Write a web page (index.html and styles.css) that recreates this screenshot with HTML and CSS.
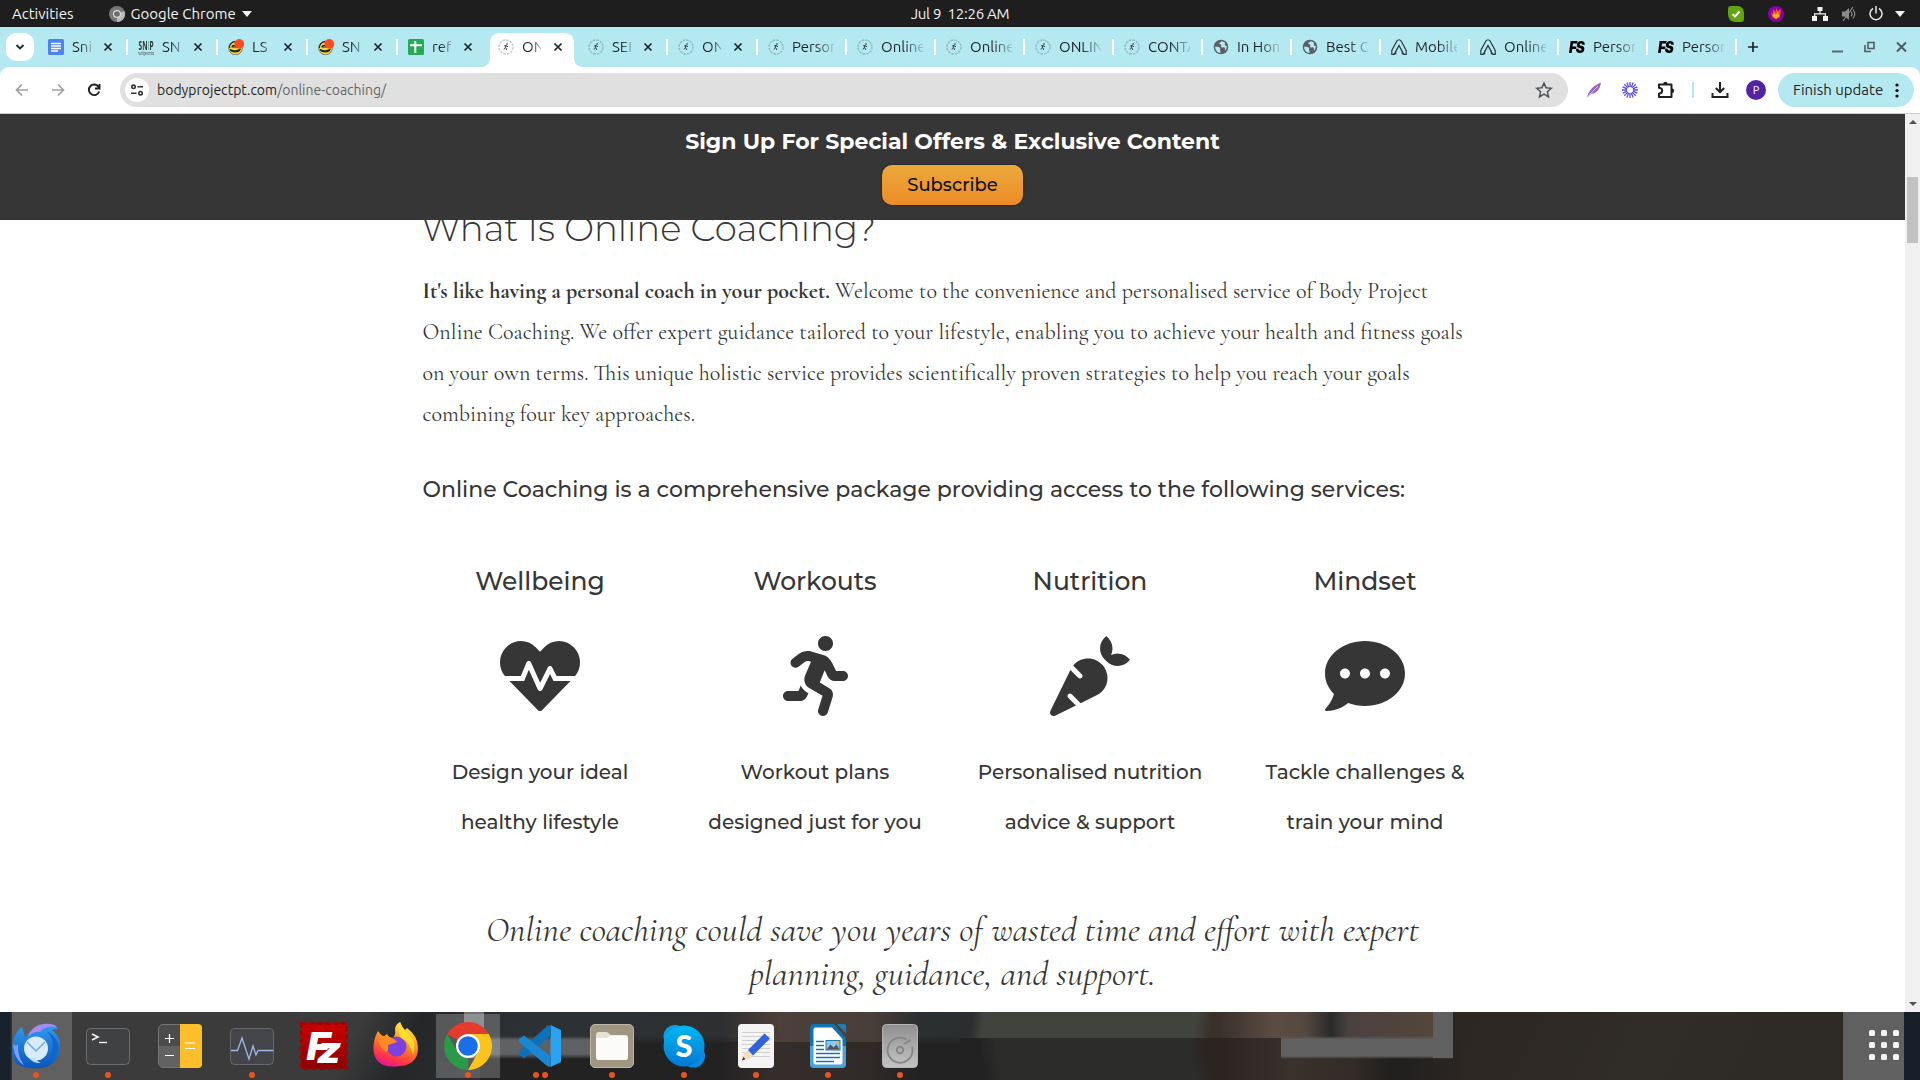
FILE: index.html
```html
<!DOCTYPE html>
<html lang="en">
<head>
<meta charset="utf-8">
<title>Online Coaching</title>
<link rel="stylesheet" href="styles.css">
</head>
<body>
<svg class="sprite" width="0" height="0" aria-hidden="true">
  <defs>
    <linearGradient id="gBird" x1="0" y1="0" x2="0" y2="1"><stop offset="0" stop-color="#2f9df5"/><stop offset="1" stop-color="#0b57b8"/></linearGradient>
    <linearGradient id="gFox" x1=".7" y1="0" x2=".3" y2="1"><stop offset="0" stop-color="#fff04a"/><stop offset=".45" stop-color="#ff8a1f"/><stop offset=".8" stop-color="#ff3647"/><stop offset="1" stop-color="#e5159a"/></linearGradient>
    <linearGradient id="gSkype" x1="0" y1="0" x2="0" y2="1"><stop offset="0" stop-color="#00b7f0"/><stop offset="1" stop-color="#0078d7"/></linearGradient>
    <linearGradient id="gDisk" x1="0" y1="0" x2="0" y2="1"><stop offset="0" stop-color="#8f8f8f"/><stop offset="1" stop-color="#c4c4c4"/></linearGradient>
    <linearGradient id="gRed" x1="0" y1="0" x2="0" y2="1"><stop offset="0" stop-color="#c90000"/><stop offset="1" stop-color="#8c0000"/></linearGradient>
  </defs>
  <symbol id="runner" viewBox="0 0 16 16"><circle cx="8" cy="8" r="7" fill="none" stroke="currentColor" stroke-opacity=".22" stroke-width="1.500" stroke-dasharray="2.700 .96"/><circle cx="9" cy="5" r=".8" fill="#222"/><path d="M6.200 6.800l1.800-.3.900.8 1.100.3M7.900 6.700L7.300 8.500l1.100 1 .2 1.400M7.300 8.600l-.6 1.200-1 .4" fill="none" stroke="#222" stroke-width=".9"/></symbol>
  <symbol id="globe" viewBox="0 0 16 16"><circle cx="8" cy="8" r="7.300" fill="#5b5f63"/><path d="M2.300 7.500c1.800.2 3.700.2 4.700 1.500.7 1-.5 1.700.2 2.500.5.700.2 2 0 2.400C4 13.500 1.800 10.500 2.300 7.500zM8.500 2.200c-.8 1.300-2.500 1-2.200 2.300.2.900 1.700.5 2 1.500.4 1.200-1 1.600.2 2.300 1.200.6 2-.6 3 .2 1 .7.300 2.200.3 3.200 1.500-1.200 2.300-3.200 1.900-5-1 .3-2.200-.4-1.800-1.500.2-.8.200-1.600-.6-2C10.500 2.600 9.500 2.200 8.500 2.200z" fill="#b5e9f1"/></symbol>
  <symbol id="arch" viewBox="0 0 16 16"><path d="M.8 15.300V11.500L5.700 2.200q2.300-3 4.600 0L15.200 11.500v3.800h-2.500L8 6.500 3.300 15.300zM4.700 15.300V12.300L8 6.500l3.300 5.800v3" fill="none" stroke="#27343a" stroke-width="1.150"/></symbol>
  <symbol id="badge" viewBox="0 0 16 16"><circle cx="7.500" cy="9" r="6.800" fill="#f5d83a" stroke="#222" stroke-width=".5"/><path d="M4 7.500c2-2 4-1 5 .5H4zM2 10.500c2 1.500 7 1.800 10 0-1 3-8 3.500-10 0zM1.300 9A6.300 6.300 0 0 1 7 2.600" fill="none" stroke="#222" stroke-width="1.100"/><circle cx="11.300" cy="4.900" r="4.800" fill="#ff4b1f"/></symbol>
  <symbol id="close" viewBox="0 0 10 10"><path d="M1.500 1.500l7 7M8.500 1.500l-7 7" stroke="#1f2427" stroke-width="1.700"/></symbol>
</svg>

<header class="topbar">
  <div class="left">
    <span>Activities</span>
    <div class="appmenu">
      <svg width="16" height="16" viewBox="0 0 16 16"><circle cx="8" cy="8" r="8" fill="#777"/><path d="M8 8L15.500 5A8 8 0 0 1 8 16z" fill="#bbb"/><circle cx="8" cy="8" r="4" fill="#ddd"/><circle cx="8" cy="8" r="2.800" fill="#6a6a6a"/></svg>
      <span>Google Chrome</span>
      <i class="caret"></i>
    </div>
  </div>
  <span class="clock">Jul 9&nbsp; 12:26 AM</span>
  <div class="tray">
    <svg width="16" height="16" viewBox="0 0 16 16"><path d="M3 0h7q6 1 6 7v6q0 3-3 3H7q-7-1-7-8V3q0-3 3-3z" fill="#62a512"/><path d="M4.500 8.200l2.500 2.300 4.500-5" fill="none" stroke="#fff" stroke-width="2"/></svg>
    <svg class="flame" width="16" height="16" viewBox="0 0 16 16"><circle cx="8" cy="8" r="8" fill="#8600ae"/><path d="M3 6l2 2V3l3 3V2l2 3 3-2-1 8q-4 4-8 0z" fill="#ff4a1c"/><path d="M5 10l1-3 2 2 2-4 1 5-3 3z" fill="#ffc321"/></svg>
    <svg class="net" width="16" height="14" viewBox="0 0 16 14"><path d="M5.500 0h5v4h-5zM0 9h5v5H0zM11 9h5v5h-5zM7.400 4h1.200v2.500H7.400zM2 6.200h12V9h-1.200V7.400H3.200V9H2z" fill="#f2f2f2"/></svg>
    <svg class="vol" width="16" height="16" viewBox="0 0 16 16"><path d="M1 5.500h3L8 2v12l-4-3.500H1z" fill="#8b8b8b"/><path d="M10 5.500q2 2.500 0 5M12 3.500q3.500 4.500 0 9M2 15L12 1" fill="none" stroke="#8b8b8b" stroke-width="1.200"/></svg>
    <svg class="pow" width="14" height="15" viewBox="0 0 14 15"><path d="M4 2.500A6 6 0 1 0 10 2.500M7 0v7.500" fill="none" stroke="#e8e8e8" stroke-width="1.500"/></svg>
    <i class="caret"></i>
  </div>
</header>

<div class="browser">
<nav class="tabstrip">
  <button class="tabsearch"><svg width="10" height="10" viewBox="0 0 10 10"><path d="M1.500 3L5 6.500 8.500 3" fill="none" stroke="#1f2427" stroke-width="1.800"/></svg></button>
  <div class="tab wide"><svg class="fav" viewBox="0 0 16 16"><rect width="16" height="16" rx="1.500" fill="#4c83ee"/><path d="M3 4.500h10M3 7h10M3 9.500h10M3 12h7" stroke="#fff" stroke-width="1.300"/></svg><span class="label">Snip</span><svg class="x"><use href="#close"/></svg></div>
  <div class="tab wide"><span class="fav snip"><b>SN<em>I</em>P</b><small>nutrigenomics</small></span><span class="label">SNI</span><svg class="x"><use href="#close"/></svg></div>
  <div class="tab wide"><svg class="fav"><use href="#badge"/></svg><span class="label">LS</span><svg class="x"><use href="#close"/></svg></div>
  <div class="tab wide"><svg class="fav"><use href="#badge"/></svg><span class="label">SNI</span><svg class="x"><use href="#close"/></svg></div>
  <div class="tab wide plain"><svg class="fav" viewBox="0 0 16 16"><rect width="16" height="16" rx="1.500" fill="#27a957"/><path d="M2 6.200h12M7.300 2v12" stroke="#fff" stroke-width="2"/></svg><span class="label">refe</span><svg class="x"><use href="#close"/></svg></div>
  <div class="tab wide active"><svg class="fav"><use href="#runner"/></svg><span class="label">ONL</span><svg class="x"><use href="#close"/></svg></div>
  <div class="tab wide"><svg class="fav"><use href="#runner"/></svg><span class="label">SER</span><svg class="x"><use href="#close"/></svg></div>
  <div class="tab wide"><svg class="fav"><use href="#runner"/></svg><span class="label">ONL</span><svg class="x"><use href="#close"/></svg></div>
  <div class="tab"><svg class="fav"><use href="#runner"/></svg><span class="label">Person</span></div>
  <div class="tab"><svg class="fav"><use href="#runner"/></svg><span class="label">Online</span></div>
  <div class="tab"><svg class="fav"><use href="#runner"/></svg><span class="label">Online</span></div>
  <div class="tab"><svg class="fav"><use href="#runner"/></svg><span class="label">ONLIN</span></div>
  <div class="tab"><svg class="fav"><use href="#runner"/></svg><span class="label">CONTA</span></div>
  <div class="tab"><svg class="fav"><use href="#globe"/></svg><span class="label">In Hom</span></div>
  <div class="tab"><svg class="fav"><use href="#globe"/></svg><span class="label">Best C</span></div>
  <div class="tab"><svg class="fav"><use href="#arch"/></svg><span class="label">Mobile</span></div>
  <div class="tab"><svg class="fav"><use href="#arch"/></svg><span class="label">Online</span></div>
  <div class="tab"><span class="fav fs">FS</span><span class="label">Person</span></div>
  <div class="tab"><span class="fav fs">FS</span><span class="label">Person</span></div>
  <svg class="newtab" width="12" height="12" viewBox="0 0 12 12"><path d="M6 1v10M1 6h10" stroke="#1f2427" stroke-width="1.700"/></svg>
  <div class="winctl">
    <svg width="11" height="12" viewBox="0 0 11 12"><path d="M0 10.500h11" stroke="#5a6a70" stroke-width="2"/></svg>
    <svg width="11" height="12" viewBox="0 0 11 12"><path d="M4 1.500h6v6H4zM1 4v6.500h6" fill="none" stroke="#4f5c61" stroke-width="1.600"/></svg>
    <svg width="11" height="12" viewBox="0 0 11 12"><path d="M1 1.500l9 9M10 1.500l-9 9" stroke="#4f5c61" stroke-width="2"/></svg>
  </div>
</nav>

<div class="toolbar">
  <div class="navbtns">
    <svg class="ico" viewBox="0 0 16 16"><path d="M14 8H3M8 2.500L2.500 8 8 13.500" fill="none" stroke="#a0a0a0" stroke-width="1.700"/></svg>
    <svg class="ico" viewBox="0 0 16 16"><path d="M2 8h11M8 2.500L13.500 8 8 13.500" fill="none" stroke="#a0a0a0" stroke-width="1.700"/></svg>
    <svg class="ico" viewBox="0 0 16 16"><path d="M12.700 5A5.300 5.300 0 1 0 13.200 9.500M13.500 2v4.500H9" fill="none" stroke="#1f1f1f" stroke-width="1.900"/></svg>
  </div>
  <div class="omnibox">
    <span class="siteinfo"><svg width="14" height="14" viewBox="0 0 14 14" fill="none" stroke="#333" stroke-width="1.600"><circle cx="3.500" cy="3.800" r="1.700"/><path d="M7.500 3.800H13M1 10.200h5.500"/><circle cx="10.500" cy="10.200" r="1.700"/></svg></span>
    <span class="url">bodyprojectpt.com<span class="path">/online-coaching/</span></span>
    <svg class="star" width="18" height="18" viewBox="0 0 24 24"><path d="M12 2.800l2.800 6.300 6.900.7-5.200 4.600 1.500 6.800-6-3.600-6 3.600 1.500-6.800-5.200-4.600 6.900-.7z" fill="none" stroke="#505356" stroke-width="2"/></svg>
  </div>
  <div class="exts">
    <svg class="ico" viewBox="0 0 16 16"><path d="M1 15.500C3 8 7 4 15 .5 14 7 11 11 5 12z" fill="#9a5fc0"/><path d="M1 15.500L12 4" stroke="#e3c9f2" stroke-width="1"/></svg>
    <svg class="ico sun" viewBox="0 0 16 16"><path d="M8 0v5M8 11v5M0 8h5M11 8h5M2.300 2.300l3.600 3.600M10.100 10.100l3.600 3.600M2.300 13.700l3.600-3.600M10.100 5.900l3.600-3.600M4.900.6l1.900 4.600M9.200 10.800l1.900 4.600M.6 11.100l4.600-1.900M10.800 6.800l4.600-1.900M.6 4.900l4.600 1.900M10.800 9.200l4.600 1.900M4.900 15.400l1.900-4.600M9.200 5.200l1.900-4.600" stroke="#5a4af0" stroke-width="1.300"/></svg>
    <svg class="puzzle" width="18" height="18" viewBox="0 0 18 18"><path d="M2 3.500h12.500V16H2V12.700q3.200-.5 3.200-3T2 6.800z" fill="none" stroke="#1f1f1f" stroke-width="2" stroke-linejoin="round"/><path d="M6.200 3a2.200 2.200 0 0 1 4.400 0zM15 7.500a2.200 2.200 0 0 1 0 4.400z" fill="#1f1f1f"/></svg>
    <i class="divider"></i>
    <svg class="dl" width="18" height="18" viewBox="0 0 18 18"><path d="M9 1v9.500M4.800 7L9 11.200 13.200 7M1.500 12v4h15v-4" fill="none" stroke="#1f1f1f" stroke-width="2"/></svg>
    <span class="avatar">P</span>
    <button class="update"><span>Finish update</span><svg width="4" height="15" viewBox="0 0 4 15"><circle cx="2" cy="2" r="1.600"/><circle cx="2" cy="7.500" r="1.600"/><circle cx="2" cy="13" r="1.600"/></svg></button>
  </div>
</div>
</div>

<main class="viewport">
  <div class="page">
    <section class="banner">
      <h2>Sign Up For Special Offers &amp; Exclusive Content</h2>
      <button class="subscribe">Subscribe</button>
    </section>
    <article class="content">
      <h1>What Is Online Coaching<span class="mark">?</span></h1>
      <p class="intro"><strong>It's like having a personal coach in your pocket.</strong> Welcome to the convenience and personalised service of Body Project Online Coaching. We offer expert guidance tailored to your lifestyle, enabling you to achieve your health and fitness goals on your own terms. This unique holistic service provides scientifically proven strategies to help you reach your goals combining four key approaches.</p>
      <h3>Online Coaching is a comprehensive package providing access to the following services:</h3>
      <div class="services">
        <div class="service">
          <h4>Wellbeing</h4>
          <svg viewBox="0 0 512 512"><path d="M320.200 243.800l-49.700 99.400c-6 12.100-23.400 11.700-28.900-.6l-56.900-126.300-30 71.700H60.600l182.500 186.500c7.100 7.300 18.600 7.300 25.700 0L451.400 288H342.300l-22.100-44.200zM473.700 73.900l-2.400-2.500c-51.500-52.600-135.800-52.600-187.400 0L256 100l-27.900-28.500c-51.500-52.700-135.900-52.700-187.400 0l-2.400 2.400C-10.400 123.700-12.500 203 31 256h102.400l35.900-86.200c5.400-12.900 23.600-13.100 29.300-.4l58.200 129.300 49-97.900c5.900-11.800 22.700-11.800 28.600 0l27.600 55.200H481c43.500-53 41.400-132.300-7.300-182.100z"/></svg>
          <p>Design your ideal<br>healthy lifestyle</p>
        </div>
        <div class="service">
          <h4>Workouts</h4>
          <svg viewBox="0 0 416 512"><path d="M272 96c26.510 0 48-21.490 48-48S298.510 0 272 0s-48 21.490-48 48 21.490 48 48 48zM113.690 317.470l-14.800 34.520H32c-17.670 0-32 14.330-32 32s14.330 32 32 32h77.450c19.250 0 36.580-11.440 44.110-29.090l8.790-20.520-10.670-6.300c-17.320-10.230-30.060-25.370-37.990-42.610zM384 223.990h-44.030l-26.060-53.250c-12.500-25.550-35.450-44.230-61.780-50.940l-71.080-21.140c-28.300-6.800-57.770-.55-80.840 17.140l-39.670 30.410c-14.030 10.750-16.690 30.830-5.940 44.860s30.840 16.660 44.860 5.910l39.690-30.410c7.670-5.890 17.440-8 25.270-6.140l14.700 4.370-37.460 87.390c-12.620 29.480-1.310 64.010 26.300 80.310l84.980 50.170-27.470 87.730c-5.280 16.860 4.110 34.820 20.970 40.090 3.190 1 6.410 1.480 9.580 1.480 13.610 0 26.230-8.770 30.520-22.450l31.640-101.060c5.910-20.770-2.890-43.080-21.640-54.390l-61.240-36.140 31.310-78.280 20.270 41.430c8 16.340 24.920 26.890 43.110 26.890H384c17.670 0 32-14.330 32-32s-14.330-31.990-32-31.990z"/></svg>
          <p>Workout plans<br>designed just for you</p>
        </div>
        <div class="service">
          <h4>Nutrition</h4>
          <svg viewBox="0 0 512 512"><path d="M298.200 156.600c-52.700-25.700-114.500-10.500-150.200 32.800l55.200 55.200c6.300 6.300 6.300 16.400 0 22.600-3.100 3.100-7.200 4.700-11.300 4.700s-8.200-1.600-11.300-4.700L130.400 217 2.300 479.700c-2.900 6-3.100 13.300 0 19.700 5.400 11.100 18.900 15.700 30 10.300l133.600-65.200-49.200-49.200c-6.300-6.200-6.300-16.400 0-22.600 6.300-6.200 16.400-6.200 22.600 0l57 57 102-49.800c24-11.700 44.500-31.300 57.100-57.100 30.100-61.700 4.500-136.100-57.200-166.200zm92.100-34.900C409.800 81 399.700 32.900 360 0c-50.300 41.700-52.500 107.500-7.900 151.900l8 8c44.400 44.600 110.300 42.400 151.900-7.900-32.900-39.700-81-49.800-121.700-30.300z"/></svg>
          <p>Personalised nutrition<br>advice &amp; support</p>
        </div>
        <div class="service">
          <h4>Mindset</h4>
          <svg viewBox="0 0 512 512"><path d="M256 32C114.600 32 0 125.100 0 240c0 49.600 21.400 95 57 130.700C44.500 421.100 2.700 466 2.200 466.500c-2.200 2.300-2.800 5.700-1.500 8.700S4.800 480 8 480c66.300 0 116-31.800 140.600-51.400 32.700 12.300 69 19.400 107.400 19.400 141.400 0 256-93.100 256-208S397.400 32 256 32zM128 272c-17.700 0-32-14.300-32-32s14.300-32 32-32 32 14.300 32 32-14.300 32-32 32zm128 0c-17.700 0-32-14.300-32-32s14.300-32 32-32 32 14.300 32 32-14.300 32-32 32zm128 0c-17.700 0-32-14.300-32-32s14.300-32 32-32 32 14.300 32 32-14.300 32-32 32z"/></svg>
          <p>Tackle challenges &amp;<br>train your mind</p>
        </div>
      </div>
      <blockquote>Online coaching could save you years of wasted time and effort with expert<br>planning, guidance, and support.</blockquote>
    </article>
  </div>
  <div class="scrollbar"><i class="up"></i><i class="thumb"></i><i class="down"></i></div>
</main>

<footer class="dock">
  <div class="app lit"><svg viewBox="0 0 48 48"><path d="M1 36C-2 24 3 9 10 5q2 5 3 11Q20 3 34 2q9-.5 12 5-4-.5-6 1c7 6 9 12 8 18C47 39 38 46.500 24 46.500 12 46.500 3 43 1 36z" fill="url(#gBird)"/><path d="M16 15C19 6 27 .5 38 2q5 .5 7 3-5-1-9 0-5 1-8 5-6-1-12 5z" fill="#a78bf0"/><path d="M1 22q2 17 11 21Q5 34 6 22q-2 3-5 0z" fill="#7f9cf5"/><path d="M35 9q8 9 5 20 0 6-8 11 12-2 15-14-1-10-12-17z" fill="#1265cc"/><circle cx="24" cy="26.500" r="12" fill="#d9ecfc"/><path d="M15 20L24 29 33 20" fill="none" stroke="#6fa9e0" stroke-width="1.500"/><path d="M17 36q4 5.500 12 5-5-2-5-5z" fill="#bfe0fb"/></svg><span class="dots"><i></i></span></div>
  <div class="app"><svg viewBox="0 0 48 48"><rect x="2.500" y="6.500" width="43" height="36" rx="4" fill="#3f4143" stroke="#6b6d6e"/><path d="M8 12l6 3-6 3" fill="none" stroke="#f3f3f3" stroke-width="1.600"/><path d="M15 20.500h8" stroke="#f3f3f3" stroke-width="1.400"/></svg><span class="dots"><i></i></span></div>
  <div class="app"><svg viewBox="0 0 48 48"><rect x="2.500" y="2.500" width="43" height="43" rx="4.500" fill="#4c4c4c" stroke="#757575"/><path d="M3 24h21v21H7q-4 0-4-4z" fill="#626262"/><path d="M24 2h18q4 0 4 4v36q0 4-4 4H24z" fill="#fdbe2b"/><path d="M9 16.500h9M13.500 12v9M9 33.500h9M29 21h10M29 26.500h10" stroke="#fff" stroke-width="1.200"/></svg></div>
  <div class="app"><svg viewBox="0 0 48 48"><rect x="2.500" y="6.500" width="43" height="36" rx="4" fill="#434549" stroke="#66686b"/><path d="M3 28.500h6.500L14 16l7 21 4-13 3 9 2-4.500h15.500" fill="none" stroke="#9fb8ea" stroke-width="1.300"/></svg><span class="dots"><i></i></span></div>
  <div class="app"><svg viewBox="0 0 48 48"><rect x="1.500" y="1.500" width="45" height="45" fill="url(#gRed)" stroke="#a50000" stroke-width="3" stroke-dasharray="5 3"/><text x="6" y="38" font-family="Montserrat" font-style="italic" font-weight="800" font-size="40" fill="#fff" textLength="24" lengthAdjust="spacingAndGlyphs">F</text><text x="18" y="41" font-family="Montserrat" font-style="italic" font-weight="800" font-size="36" fill="#fff" textLength="22" lengthAdjust="spacingAndGlyphs">z</text></svg></div>
  <div class="app"><svg viewBox="0 0 48 48"><path d="M6 9l5 6 4-3q2 4 6 4 3-3 2-9 0-4 5-7 2 6 5 8l2-2q11 8 11 20 0 18-22 18.500Q3 46 1.500 28 1 17 6 9z" fill="url(#gFox)"/><circle cx="24.500" cy="24.500" r="10" fill="#7b42e0"/><path d="M5 12l10 3q6 0 10 5l-9 3q1 5-2 7-8-5-9-18z" fill="#ff8b22"/><path d="M28 0q4 9 10 13 7 9 3 20-3-13-12-17-5-7-1-16z" fill="#ffe02f" opacity=".85"/></svg></div>
  <div class="app current"><svg viewBox="0 0 48 48"><path d="M24 24L3.220 12A24 24 0 0 1 44.780 12L24 12z" fill="#e33b2e"/><path d="M24 24L24 48A24 24 0 0 1 3.220 12L13.600 30z" fill="#2a9a48"/><path d="M24 12H44.780A24 24 0 0 1 24 48L34.400 30z" fill="#fcc31a"/><circle cx="24" cy="24" r="12" fill="#fff"/><circle cx="24" cy="24" r="9.800" fill="#1a6fe8"/></svg><span class="dots"><i></i></span></div>
  <div class="app"><svg viewBox="0 0 48 48"><path d="M34.500 3L45 8v32l-10.500 5z" fill="#2aa3f2"/><path d="M34.500 3v11L8 36.500 3 32.500v-3L31 4z" fill="#0e70b8"/><path d="M34.500 45V34L8 13.500 3 17v3l28 24z" fill="#1b86d2"/></svg><span class="dots"><i></i><i></i></span></div>
  <div class="app"><svg viewBox="0 0 48 48"><rect x="2.500" y="2.500" width="43" height="43" rx="4.500" fill="#9e9682" stroke="#bdb7a6"/><path d="M8 13q0-3 3-3h7q2 0 3 1.500l1.500 1.500H37q3 0 3 3v19q0 3-3 3H11q-3 0-3-3z" fill="#e6e2d8"/><path d="M8 16h11l3-2.500h15q3 0 3 3V35q0 3-3 3H11q-3 0-3-3z" fill="#fbfbfa"/></svg><span class="dots"><i></i></span></div>
  <div class="app"><svg viewBox="0 0 48 48"><circle cx="15" cy="14.500" r="11.500" fill="#0aa0e6"/><circle cx="33.500" cy="34" r="11.500" fill="#0b8be0"/><circle cx="24" cy="24" r="20.500" fill="url(#gSkype)"/><text x="24" y="35" text-anchor="middle" font-family="Lato" font-weight="900" font-size="31" fill="#fff">S</text></svg><span class="dots"><i></i></span></div>
  <div class="app"><svg viewBox="0 0 48 48"><rect x="6" y="2" width="36" height="44" rx="4" fill="#f4f4f4"/><path d="M10 10.500h28M10 14.500h28M10 18.500h28M10 22.500h28M10 26.500h28M10 30.500h28M10 34.500h28" stroke="#cfcfcf"/><path d="M10 38l2.500-7.500L16 28l5 5-3.500 3.500z" fill="#fbdcb4"/><path d="M10 38.500l1.200-3.500 2.300 2.200z" fill="#333"/><path d="M16 28L32.500 11.500l5.500 5L21 33.500z" fill="#2f62dd"/></svg><span class="dots"><i></i></span></div>
  <div class="app"><svg viewBox="0 0 48 48"><path d="M6 6q0-4 4-4h20l12 14v26q0 4-4 4H10q-4 0-4-4z" fill="#1173ae"/><path d="M6 24h36v18q0 4-4 4H10q-4 0-4-4z" fill="#49a3d8"/><path d="M9.500 7.500q0-2 2-2H28L38.500 17v23.500q0 2-2 2h-25q-2 0-2-2z" fill="#fff"/><path d="M33 2h7q2 0 2 2v7.500z" fill="#1d7fba"/><path d="M12 19.500h8M12 23.500h8M12 27.500h8M12 31.500h24M12 35.500h24M12 39.500h18" stroke="#1b76ae" stroke-width="1.600"/><rect x="22" y="18.500" width="14" height="9.500" fill="#8cc8ee" stroke="#1b76ae"/><path d="M22.500 27.500l4-5 3 3 3-3 3 5z" fill="#555"/><circle cx="33.500" cy="20.800" r="1.500" fill="#f5b51b"/></svg><span class="dots"><i></i></span></div>
  <div class="app"><svg viewBox="0 0 48 48"><rect x="6.500" y="2.500" width="35" height="43" rx="4" fill="url(#gDisk)" stroke="#b5b5b5"/><path d="M36 24.500A12.500 12.500 0 1 1 30.500 17.500M28.500 22l6-4M28.500 22l-.5-1" fill="none" stroke="#868686" stroke-width="1.900"/><circle cx="24" cy="28" r="3.200" fill="none" stroke="#868686" stroke-width="1.900"/></svg><span class="dots"><i></i></span></div>
  <div class="appgrid"><i></i><i></i><i></i><i></i><i></i><i></i><i></i><i></i><i></i></div>
</footer>
</body>
</html>
```
FILE: styles.css
```css
* { box-sizing: border-box; }
body { margin: 0; width: 1920px; height: 1080px; overflow: hidden; display: flex; flex-direction: column; background: #fff; font-family: Ubuntu, "Noto Sans", sans-serif; font-size: 15px; color: #1f2427; }
.sprite { position: absolute; }
button { border: 0; padding: 0; font: inherit; color: inherit; }
svg { flex: none; display: block; }

/* Desktop top bar */
.topbar { height: 27px; flex: none; background: #1e1e1e; color: #f2f2f2; display: grid; grid-template-columns: 1fr auto 1fr; align-items: center; }
.left { display: flex; align-items: center; gap: 35px; padding-left: 12px; }
.appmenu { display: flex; align-items: center; gap: 6px; }
.caret { border: 5px solid transparent; border-top: 6px solid #f2f2f2; border-bottom: 0; }
.clock { letter-spacing: -.25px; margin-top: -1px; }
.tray { display: flex; align-items: center; justify-content: flex-end; padding-right: 15px; }
.flame { margin: 0 28px 0 24px; }
.vol { margin: 0 12px 0 13px; }
.pow { margin-right: 12px; }

/* Browser window */
.browser { flex: none; background: #b5e9f1; }
.tabstrip { height: 40px; display: flex; align-items: center; }
.tabsearch { flex: none; width: 28px; height: 28px; margin: 0 3px 0 6px; border-radius: 10px; background: #fff; display: grid; place-items: center; }
.tab { position: relative; flex: none; width: 89px; height: 34px; display: flex; align-items: center; padding-left: 11px; }
.tab.wide { width: 90px; }
.tab::after { content: ""; position: absolute; right: -1px; top: 9px; width: 2px; height: 16px; background: #fff; }
.tab.plain::after { display: none; }
.fav { flex: none; width: 16px; height: 16px; margin-right: 8px; }
.label { width: 42px; margin-top: -1px; overflow: hidden; white-space: nowrap; -webkit-mask-image: linear-gradient(90deg, #000 55%, rgba(0,0,0,.15)); mask-image: linear-gradient(90deg, #000 55%, rgba(0,0,0,.15)); }
.wide .label { width: 19px; -webkit-mask-image: linear-gradient(90deg, #000 45%, rgba(0,0,0,.3)); mask-image: linear-gradient(90deg, #000 45%, rgba(0,0,0,.3)); }
.x { width: 10px; height: 10px; margin-left: 12px; }
.snip { display: flex; flex-direction: column; align-items: center; line-height: 1; color: #333; white-space: nowrap; }
.snip b { font: 700 13px/12px "Open Sans", sans-serif; transform: scaleX(.5); }
.snip em { font-style: normal; color: #55c2a8; }
.snip small { font-size: 5px; line-height: 4px; transform: scaleX(.5); }
.fs { font: italic 900 16px/16px Inter, sans-serif; letter-spacing: -1.500px; color: #000; transform: scaleX(.85); transform-origin: left; }
.active { align-self: flex-start; margin-top: 6px; padding-bottom: 6px; }
.active > * { position: relative; z-index: 2; }
.tab.active::before { content: ""; position: absolute; left: -5px; bottom: 0; width: 100px; height: 8px; background:
  radial-gradient(circle at 0 0, transparent 7.500px, #fff 8px) 0 0 / 8px 8px no-repeat,
  radial-gradient(circle at 100% 0, transparent 7.500px, #fff 8px) 100% 0 / 8px 8px no-repeat; }
.tab.active::after { z-index: 1; left: 3px; right: auto; top: 0; width: 84px; height: 35px; background: #fff; border-radius: 9px 9px 0 0; }
.newtab { margin-left: 11px; }
.winctl { margin-left: auto; display: flex; gap: 21px; padding-right: 13px; }

.toolbar { height: 47px; display: flex; align-items: center; position: relative; z-index: 1; background: #fff; border-bottom: 1px solid #ccc; border-radius: 9px 9px 0 0; padding: 0 6px 0 14px; }
.ico { width: 16px; height: 16px; }
.navbtns { display: flex; gap: 20px; margin-right: 18px; }
.omnibox { width: 1448px; height: 34px; border-radius: 17px; background: #e0e0e0; display: flex; align-items: center; padding: 0 15px 0 5px; }
.siteinfo { width: 24px; height: 24px; border-radius: 50%; background: #fff; display: grid; place-items: center; }
.url { margin-left: 8px; font-size: 14px; color: #1f1f1f; }
.path { color: #63666a; }
.star { margin-left: auto; }
.exts { display: flex; align-items: center; margin-left: 18px; }
.sun { margin: 0 19px 0 20px; }
.divider { width: 2px; height: 16px; background: #b5e9f1; margin: 0 17px; }
.avatar { width: 20px; height: 20px; border-radius: 50%; background: #5323a4; color: #fff; font-size: 11px; display: grid; place-items: center; margin: 0 12px 0 17px; }
.update { width: 136px; height: 34px; border-radius: 17px; background: #b5e9f1; display: flex; align-items: center; justify-content: space-between; padding: 0 15px; }
.update span { margin-top: -1px; }

/* Web page */
.viewport { height: 898px; flex: none; display: flex; overflow: hidden; }
.page { width: 1905px; overflow: hidden; color: #363636; font-family: Montserrat, Inter, sans-serif; }
.banner { height: 106px; background: #363636; position: relative; z-index: 1; display: flex; flex-direction: column; align-items: center; color: #fff; padding-top: 13px; }
.banner h2 { margin: 0 0 8px; font-size: 22px; line-height: 30px; font-weight: 700; }
.subscribe { width: 141px; height: 40px; border-radius: 10px; font-size: 18px; font-weight: 500; background: linear-gradient(#eba93a, #ec8b29); color: #111; box-shadow: 0 0 2px rgba(0,0,0,.7); }
.content { width: 1100px; margin: -13px auto 0; }
h1 { margin: 0 19px; font-size: 35.500px; line-height: 44px; font-weight: 300; }
.mark { margin-left: -2px; }
.intro { margin: 20px 20px 0; font-family: "Cormorant Garamond", "Liberation Serif", serif; font-size: 22px; line-height: 41px; }
h3 { margin: 39px 20px 0; font-size: 22px; line-height: 32px; font-weight: 500; white-space: nowrap; }
.services { margin-top: 57px; display: grid; grid-template-columns: repeat(4, 275px); text-align: center; }
h4 { margin: 0 0 37px; font-size: 25px; line-height: 36px; font-weight: 500; }
.service svg { height: 80px; margin: 0 auto 31px; fill: #363636; }
.service p { margin: 0; font-size: 20px; line-height: 50px; font-weight: 500; }
blockquote { margin: 61px 0 0; text-align: center; font: italic 35.280px/44px "Cormorant Garamond", "Liberation Serif", serif; }

.scrollbar { width: 15px; background: #f0f0f0; display: flex; flex-direction: column; align-items: center; }
.up { margin-top: 6px; border: 4px solid transparent; border-top: 0; border-bottom: 4px solid #505050; }
.thumb { width: 11px; height: 66px; background: #c1c1c1; margin: 53px 0 auto; }
.down { margin-bottom: 6px; border: 4px solid transparent; border-bottom: 0; border-top: 4px solid #505050; }

/* Dock over the blurred wallpaper */
.dock { height: 68px; flex: none; display: flex; align-items: flex-start; background:
  linear-gradient(#606060, #606060) 1843px 0 / 61px 100% no-repeat,
  linear-gradient(#171f2b, #171f2b) 1904px 0 / 16px 100% no-repeat,
  linear-gradient(#606060, #606060) 1433px 0 / 20px 46px no-repeat,
  linear-gradient(transparent, #606060 3px 20px, transparent) 1281px 24px / 172px 23px no-repeat,
  linear-gradient(#707172, #707172) 464px 0 / 20px 46px no-repeat,
  linear-gradient(transparent, #606162 4px 18px, transparent) 464px 24px / 145px 23px no-repeat,
  linear-gradient(90deg, #3a312b, #5c4c42 25%, #564840 40%, #2a2a2a 52%, #4a4040 60%, #54463a) 1220px 0 / 213px 26px no-repeat,
  linear-gradient(97deg, #2b2d2e 12px, #41433e 24px 235px, #3a312b 250px) 960px 0 / 260px 26px no-repeat,
  linear-gradient(78deg, #222 26px, #2c2c2b 42px 232px, #2b2522 246px) 960px 26px / 260px 42px no-repeat,
  linear-gradient(90deg, #2b2522, #3a312c 30%, #332b27 55%, #201f1e 72%, #2b2623) 1220px 26px / 240px 42px no-repeat,
  linear-gradient(90deg, transparent, rgba(85,67,60,.8) 30%, rgba(80,67,60,.8) 75%, transparent) 720px 0 / 200px 30px no-repeat,
  linear-gradient(90deg, transparent, #352d2b 25%, #302a29 75%, transparent) 720px 26px / 200px 42px no-repeat,
  linear-gradient(rgba(34,34,34,0), #222 8px) 480px 24px / 480px 44px no-repeat,
  linear-gradient(90deg, #17222c 10px, #3b3b3b 12px, #3b3b3b 200px, transparent 200px),
  linear-gradient(115deg, #3b3b3b 330px, #242628 385px, #2e3133 480px, #2b2d2e 1000px, #2b2521 1280px, #302c27 1500px, #2d2924 1700px, #1b1a18 1760px); }
.app { position: relative; width: 72px; height: 68px; padding: 10px 12px 0; }
.app svg { width: 48px; height: 48px; position: relative; }
.lit { background: linear-gradient(#606060, #606060) 12px 0 / 60px 100% no-repeat; }
.current { background: linear-gradient(rgba(255,255,255,.22), rgba(255,255,255,.22)) 4px 2px / 64px 64px no-repeat; }
.dots { position: absolute; left: 0; right: 0; top: 60px; display: flex; justify-content: center; gap: 3px; }
.dots i { width: 6px; height: 6px; border-radius: 50%; background: #e95420; }
.appgrid { margin: 18px 21px 0 auto; display: grid; grid-template-columns: repeat(3, 6px); gap: 6px; }
.appgrid i { width: 6px; height: 6px; border-radius: 1.500px; background: #f2f2f2; }
```
